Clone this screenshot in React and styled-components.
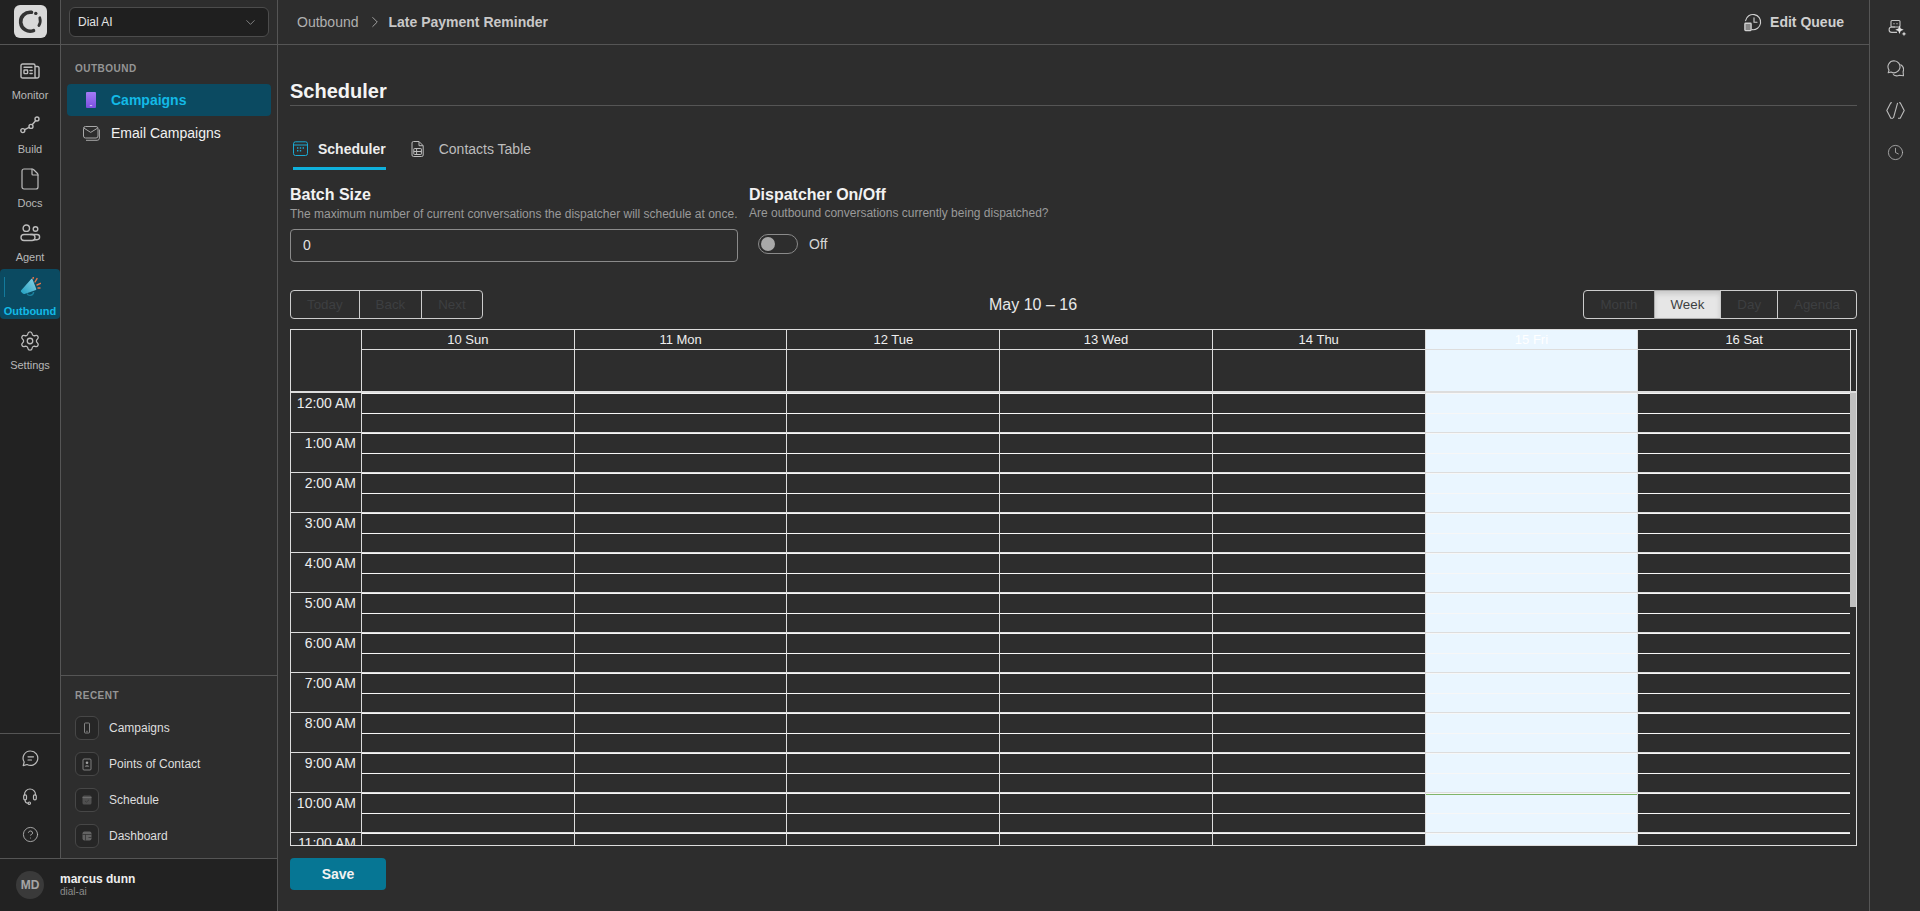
import React from "react";
import styled, { createGlobalStyle } from "styled-components";
import { Settings, File, ChevronDown, ChevronRight, Clock, CircleHelp } from "lucide-react";

const Global = createGlobalStyle`
  * { box-sizing: border-box; }
  html, body { margin: 0; padding: 0; height: 100%; background: #2d2d2d; overflow: hidden; }
  body { font-family: "Liberation Sans", Arial, sans-serif; color: #eee; }
  #root { height: 100%; }
`;

const Shell = styled.div`display: flex; height: 911px; width: 1920px; background: #2d2d2d;`;
const LeftPane = styled.div`width: 278px; flex: none; display: flex; flex-direction: column; border-right: 1px solid #555;`;
const LeftTop = styled.div`flex: 1; display: flex; min-height: 0;`;
const Rail = styled.div`width: 61px; flex: none; display: flex; flex-direction: column; background: #222; border-right: 1px solid #555;`;
const LogoCell = styled.div`height: 45px; flex: none; border-bottom: 1px solid #555; display: flex; justify-content: center; align-items: center; padding-bottom: 1px;`;
const LogoBox = styled.div`width: 33px; height: 33px; border-radius: 6px; background: #d9d9d9; display: flex; align-items: center; justify-content: center;`;
const RailNav = styled.nav`flex: 1; padding-top: 8px; display: flex; flex-direction: column; gap: 4px;`;
const RailItem = styled.div`
  position: relative; height: 50px; display: flex; flex-direction: column; align-items: center; padding-top: 8px;
  border-radius: 4px; background: ${p => (p.$active ? "#0b4a61" : "transparent")};
  ${p => p.$active && `&::before { content: ""; position: absolute; left: 4px; top: 8px; width: 1px; height: 20px; background: #137a9c; }`}
`;
const RailIcon = styled.div`height: 20px; display: flex; align-items: center; justify-content: center;`;
const RailLabel = styled.div`
  margin-top: 8px; font-size: 11px; line-height: 13px; white-space: nowrap;
  color: ${p => (p.$active ? "#13b9e6" : "#b8b8b8")}; font-weight: ${p => (p.$active ? 700 : 400)};
`;
const RailBottom = styled.div`height: 125px; flex: none; border-top: 1px solid #555; padding-top: 5px; display: flex; flex-direction: column;`;
const RailBottomItem = styled.div`height: 38px; display: flex; align-items: center; justify-content: center; color: #bbb;`;

const Side = styled.div`flex: 1; min-width: 0; display: flex; flex-direction: column;`;
const SideTop = styled.div`height: 45px; flex: none; border-bottom: 1px solid #555; padding: 7px 8px 0;`;
const Select = styled.div`
  height: 30px; border: 1px solid #4c4c4c; border-radius: 6px; background: #1f1f1f; padding: 0 10px 0 8px;
  display: flex; align-items: center; justify-content: space-between; font-size: 12px; color: #e4e4e4;
`;
const SideNav = styled.div`flex: 1; padding: 17px 6px 0;`;
const SectionLabel = styled.div`font-size: 10px; line-height: 13px; font-weight: 700; letter-spacing: 0.5px; color: #959595; padding-left: 8px;`;
const NavList = styled.div`margin-top: 9px; display: flex; flex-direction: column; gap: 1px;`;
const NavItem = styled.div`
  height: 32px; border-radius: 4px; display: flex; align-items: center; padding-left: 14px; gap: 10px; font-size: 14px;
  background: ${p => (p.$active ? "#0b4a61" : "transparent")};
  color: ${p => (p.$active ? "#13b9e6" : "#f2f2f2")}; font-weight: ${p => (p.$active ? 700 : 400)};
`;
const NavIcon = styled.div`width: 20px; display: flex; justify-content: center; align-items: center;`;
const Recent = styled.div`height: 183px; flex: none; border-top: 1px solid #555; padding: 13px 6px 0;`;
const RecentList = styled.div`margin-top: 8px; display: flex; flex-direction: column;`;
const RecentItem = styled.div`height: 36px; display: flex; align-items: center; gap: 10px; padding-left: 8px; font-size: 12px; color: #dedede;`;
const RecentIcon = styled.div`width: 24px; height: 24px; border: 1px solid #474747; border-radius: 6px; background: #262626; display: flex; align-items: center; justify-content: center;`;
const UserBar = styled.div`height: 53px; flex: none; background: #222; border-top: 1px solid #555; display: flex; align-items: center; padding-left: 16px; gap: 16px;`;
const Avatar = styled.div`width: 28px; height: 28px; border-radius: 50%; background: #3a3a3a; color: #a5a5a5; font-size: 12px; font-weight: 700; display: flex; align-items: center; justify-content: center;`;
const UserName = styled.div`font-size: 12px; line-height: 14px; font-weight: 700; color: #eee;`;
const UserOrg = styled.div`font-size: 10px; line-height: 12px; color: #8c8c8c;`;

const Main = styled.div`flex: 1; min-width: 0; display: flex; flex-direction: column;`;
const TopBar = styled.div`height: 45px; flex: none; border-bottom: 1px solid #555; display: flex; align-items: center; justify-content: space-between; padding: 0 25px 0 19px;`;
const Crumbs = styled.div`display: flex; align-items: center; font-size: 14px; color: #b0b0b0;`;
const CrumbSep = styled.span`display: inline-flex; margin: 0 5px 0 7px; color: #b8b8b8;`;
const CrumbCurrent = styled.span`font-weight: 700; color: #c8c8c8;`;
const EditQueue = styled.div`display: flex; align-items: center; gap: 7px; font-size: 14px; font-weight: 700; color: #d0d0d0;`;
const Content = styled.div`flex: 1; min-height: 0; padding: 34px 12px 0; display: flex; flex-direction: column;`;
const Title = styled.h1`margin: 0; font-size: 20px; line-height: 24px; font-weight: 700; color: #f4f4f4; padding-bottom: 2px; border-bottom: 1px solid #555; height: 27px;`;
const Tabs = styled.div`margin-top: 24px; height: 40px; display: flex; gap: 25px; padding-left: 3px;`;
const Tab = styled.div`
  height: 40px; display: flex; align-items: center; gap: ${p => (p.$active ? "10px" : "15px")}; font-size: 14px; padding-top: 0;
  font-weight: ${p => (p.$active ? 700 : 400)}; color: ${p => (p.$active ? "#eee" : "#bdbdbd")};
  border-bottom: 3px solid ${p => (p.$active ? "#0fb0db" : "transparent")};
`;
const FormRow = styled.div`margin-top: 15px; display: flex; gap: 11px; height: 77px;`;
const Field = styled.div`width: ${p => p.$w}px; flex: none;`;
const FieldLabel = styled.div`font-size: 16px; line-height: 20px; font-weight: 700; color: #f2f2f2;`;
const FieldHelp = styled.div`margin-top: ${p => p.$mt || 2}px; font-size: 12px; line-height: 14px; color: #9a9a9a; white-space: nowrap;`;
const NumberInput = styled.input`
  display: block; width: 100%; height: 33px; margin-top: 8px; padding: 0 12px 2px; background: transparent; border: 1px solid #8a8a8a; border-radius: 4px;
  font: 14px "Liberation Sans", Arial, sans-serif; color: #e2e2e2; outline: none;
`;
const ToggleRow = styled.div`display: flex; align-items: center; gap: 11px; margin-top: 14px; padding-left: 9px; font-size: 14px; color: #d6d6d6;`;
const Toggle = styled.div`width: 40px; height: 20px; border-radius: 10px; border: 1px solid #8a8a8a; padding: 2px 0 0 2px;`;
const Knob = styled.div`width: 14px; height: 14px; border-radius: 50%; background: #a8a8a8;`;

const Toolbar = styled.div`margin-top: 28px; height: 29px; display: flex; align-items: center; flex: none;`;
const BtnGroup = styled.div`display: inline-flex;`;
const CalBtn = styled.div`
  height: 29px; padding: 6px 16px; font-size: 13.333px; line-height: 15px; border: 1px solid #ccc; color: #3d3f41;
  margin-left: -1px;
  &:first-child { margin-left: 0; border-radius: 4px 0 0 4px; }
  &:last-child { border-radius: 0 4px 4px 0; }
  ${p => p.$active && `background: #e6e6e6; border-color: #adadad; box-shadow: inset 0 3px 5px rgba(0,0,0,.125);`}
`;
const CalLabel = styled.div`flex: 1; text-align: center; font-size: 16px; color: #e8e8e8;`;

const Calendar = styled.div`margin-top: 10px; height: 517px; flex: none; border: 1px solid #ddd; display: flex; flex-direction: column;`;
const CalHead = styled.div`display: flex; flex: none; margin-right: 5px;`;
const Corner = styled.div`width: 70px; flex: none;`;
const HeadContent = styled.div`flex: 1; min-width: 0; border-right: 1px solid #ddd; display: flex; flex-direction: column;`;
const HeadRow = styled.div`display: flex; height: 20px; border-bottom: 1px solid #ddd;`;
const HeadCell = styled.div`
  flex: 1 1 0; min-width: 0; text-align: center; font-size: 13px; line-height: 19px; color: ${p => (p.$today ? "#ffffff" : "#eee")};
  border-left: 1px solid #ddd; background: ${p => (p.$today ? "#eaf6ff" : "transparent")};
`;
const AllDayRow = styled.div`display: flex; height: 41px;`;
const AllDayCell = styled.div`flex: 1 1 0; min-width: 0; border-left: 1px solid #ddd; background: ${p => (p.$today ? "#eaf6ff" : "transparent")};`;
const CalBody = styled.div`flex: 1; min-height: 0; display: flex; overflow: hidden; border-top: 2px solid #ddd;`;
const CalGrid = styled.div`flex: 1; min-width: 0; display: flex; overflow: hidden;`;
const ScrollTrack = styled.div`width: 6px; flex: none;`;
const ScrollThumb = styled.div`height: 214px; background: #c0c0c0;`;
const Gutter = styled.div`width: 70px; flex: none;`;
const DayCol = styled.div`position: relative; flex: 1 1 0; min-width: 0; border-left: 1px solid #ddd; background: ${p => (p.$today ? "#eaf6ff" : "transparent")};`;
const HourGroup = styled.div`height: 40px; flex: none; border-bottom: 1px solid #ddd; display: flex; flex-direction: column;`;
const GutterLabel = styled.div`font-size: 14px; line-height: 20px; text-align: right; padding-right: 5px; color: #eee; white-space: nowrap;`;
const Slot = styled.div`flex: 1; border-top: 1px solid #f7f7f7;`;
const NowLine = styled.div`position: absolute; left: 0; right: 0; top: 401px; height: 1px; background: #7fb56a;`;
const SaveBtn = styled.button`
  margin-top: 12px; width: 96px; height: 32px; flex: none; border: 0; border-radius: 4px; background: #067694; color: #f2f2f2;
  font: 700 14px "Liberation Sans", Arial, sans-serif;
`;

const RightRail = styled.div`width: 51px; flex: none; border-left: 1px solid #555; display: flex; flex-direction: column; align-items: center; padding-top: 16px; gap: 21px;`;
const RightIcon = styled.div`height: 21px; display: flex; align-items: center; justify-content: center;`;

const sk = { fill: "none", stroke: "#bdbdbd", strokeWidth: 1.4, strokeLinecap: "round", strokeLinejoin: "round" };

const LogoMark = () => (
  <svg width="33" height="33" viewBox="0 0 33 33">
    <g fill="none" stroke="#333" strokeLinecap="round">
      <path d="M17.5 7.3A9.5 9.5 0 1 0 19.5 25.6" strokeWidth="3.6" />
      <path d="M25.8 12.8a9.5 9.5 0 0 1-.9 7.7" strokeWidth="2.8" />
    </g>
    <circle cx="21.8" cy="8.4" r="1.7" fill="#333" />
  </svg>
);
const MonitorIcon = () => (
  <svg width="20" height="16" viewBox="0 0 20 16" {...sk}>
    <path d="M15 3.5h2.6A1.4 1.4 0 0 1 19 5v8.2a1.8 1.8 0 0 1-1.8 1.8H2.6A1.6 1.6 0 0 1 1 13.4V2.6A1.6 1.6 0 0 1 2.6 1h10.8A1.6 1.6 0 0 1 15 2.6V13.2A1.8 1.8 0 0 0 16.8 15" />
    <rect x="4" y="7" width="3.6" height="3.6" rx=".5" />
    <path d="M4 4.2h8M10 7.5h2.2M10 10.5h2.2" />
  </svg>
);
const BuildIcon = () => (
  <svg width="20" height="18" viewBox="0 0 20 18" {...sk}>
    <circle cx="2.8" cy="14.6" r="2" /><circle cx="11" cy="10.4" r="2" /><circle cx="17" cy="3" r="2" />
    <path d="M4.6 13.7l4.6-2.4M12.2 8.8l3.6-4.3" />
  </svg>
);
const AgentIcon = () => (
  <svg width="21" height="18" viewBox="0 0 21 18" {...sk}>
    <circle cx="6.3" cy="4.2" r="3.2" /><circle cx="15.5" cy="5" r="2.3" />
    <path d="M4 10.5h8a3 3 0 0 1 0 6H4a3 3 0 0 1 0-6z" />
    <path d="M10.5 10.5h6.5a2.6 2.6 0 0 1 0 5.2h-3" />
  </svg>
);
const MegaphoneIcon = () => (
  <svg width="21" height="21" viewBox="0 0 21 21">
    <defs><linearGradient id="mg" x1="0" y1="1" x2="1" y2="0"><stop offset="0" stopColor="#1f9fc0" /><stop offset="1" stopColor="#8ad3e8" /></linearGradient></defs>
    <path d="M1 13.5 11 2.2c.6-.6 1.3-.5 1.6.2l3.6 9.4c.3.8-.1 1.4-.9 1.4L4.5 17c-.8.2-1.4 0-2-.7L1.2 15c-.4-.5-.5-1-.2-1.5z" fill="url(#mg)" />
    <path d="M7 16.5a3.5 3.5 0 0 0 6.6-1.5" fill="none" stroke="#1b7f9c" strokeWidth="1.4" />
    <path d="M15 5l2-3.4M17 8l3.6-1.6M13 1.5 13.4 0M18 11h2" stroke="#e5744a" strokeWidth="1.4" strokeLinecap="round" fill="none" />
  </svg>
);
const PhoneIcon = () => (
  <svg width="10" height="16" viewBox="0 0 10 16">
    <defs><linearGradient id="ph" x1="0" y1="0" x2="0" y2="1"><stop offset="0" stopColor="#a47bf5" /><stop offset="1" stopColor="#7a4fe0" /></linearGradient></defs>
    <rect width="10" height="16" rx="1" fill="url(#ph)" />
    <path d="M3.8 13.6h2.4" stroke="#e8defc" strokeWidth=".8" />
  </svg>
);
const MailIcon = () => (
  <svg width="17" height="15" viewBox="0 0 17 15" fill="none" stroke="#a8a8a8" strokeWidth="1">
    <rect x=".5" y=".5" width="14.5" height="11.5" rx="2" />
    <path d="M.8 2l6.9 4.4L14.8 2" />
    <path d="M16.4 3.5v8.6a2.2 2.2 0 0 1-2.2 2.2H3" />
  </svg>
);
const ChatIcon = () => (
  <svg width="17" height="17" viewBox="0 0 17 17" {...sk} strokeWidth="1.2">
    <path d="M8.7 1a7.2 7.2 0 1 1-3.6 13.5L1.2 15.6l1-3.6A7.2 7.2 0 0 1 8.7 1z" />
    <path d="M6 6.8h5.5M6 10h3.5" />
  </svg>
);
const HeadsetIcon = () => (
  <svg width="14" height="17" viewBox="0 0 14 17" {...sk} strokeWidth="1.2">
    <path d="M1.5 7V6.5a5.5 5.5 0 0 1 11 0V7" />
    <rect x=".7" y="6.8" width="2.8" height="5" rx="1.3" /><rect x="10.5" y="6.8" width="2.8" height="5" rx="1.3" />
    <path d="M2 11.8c0 2 1 3.4 3 3.4" /><circle cx="6.3" cy="15.2" r="1.2" />
  </svg>
);
const MiniPhone = () => (<svg width="12" height="12" viewBox="0 0 12 12" fill="none" stroke="#8f8f8f" strokeWidth=".9"><rect x="3.5" y="1" width="5" height="10" rx=".8" /><path d="M5.3 9.3h1.4" /></svg>);
const MiniContact = () => (<svg width="12" height="13" viewBox="0 0 12 13"><rect x="2" y="1" width="8" height="11" rx="1" fill="none" stroke="#8a8a8a" strokeWidth=".9" /><circle cx="6" cy="4.8" r="1.3" fill="#a0a0a0" /><path d="M3.8 8.6c.3-1.4 4.1-1.4 4.4 0z" fill="#a0a0a0" /></svg>);
const MiniSchedule = () => (<svg width="12" height="12" viewBox="0 0 12 12"><rect x="1.5" y="1.5" width="9" height="9" rx="1.6" fill="#505050" /><path d="M1.5 3.6h9" stroke="#777" strokeWidth=".8" /><path d="M4 7l1.4 1.2L8 5.8" fill="none" stroke="#393939" strokeWidth=".8" /></svg>);
const MiniDash = () => (<svg width="12" height="12" viewBox="0 0 12 12"><rect x="1.5" y="1.5" width="9" height="9" rx="2" fill="#636363" /><path d="M1.5 4.5h9M4.5 4.5v6M7.5 7.5h3" stroke="#2d2d2d" strokeWidth=".7" /></svg>);
const QueueIcon = () => (
  <svg width="19" height="19" viewBox="0 0 19 19" fill="none" stroke="#cfcfcf" strokeWidth="1.1" strokeLinecap="round">
    <path d="M1.6 7.6A7.6 7.6 0 1 1 8 16.6" /><path d="M10 4.8v4.4h3" />
    <rect x="0.2" y="9.6" width="7.6" height="8.6" rx="1.4" fill="#cfcfcf" stroke="none" />
    <path d="M2 12h4M2 14h4M2 16h4" stroke="#2d2d2d" strokeWidth=".9" />
  </svg>
);
const TabCal = () => (
  <svg width="15" height="15" viewBox="0 0 15 15" fill="none" stroke="#1ba9d2" strokeWidth="1">
    <rect x=".5" y=".8" width="14" height="13.7" rx="2" /><path d="M.5 4h14" />
    <path d="M4 7h1.4M6.8 7h1.4M9.6 7h1.4M4 9.8h1.4M6.8 9.8h1.4" strokeWidth="1.4" />
  </svg>
);
const TabDoc = () => (
  <svg width="13" height="16" viewBox="0 0 13 16" fill="none" stroke="#bdbdbd" strokeWidth="1">
    <path d="M1 14V2A1.5 1.5 0 0 1 2.5.5H8L12.2 4.7V14A1.5 1.5 0 0 1 10.7 15.5H2.5A1.5 1.5 0 0 1 1 14zM8 .7v4h4" />
    <rect x="2.8" y="7.5" width="7.6" height="6" rx=".6" /><path d="M2.8 10.5h7.6M5.6 7.5v6" />
  </svg>
);
const BotSpark = () => (
  <svg width="23" height="23" viewBox="-4 -4 23 23" fill="none" stroke="#c4c4c4" strokeWidth="1.1">
    <rect x="3" y="1.5" width="9" height="6.5" rx="1" /><path d="M6 4.2v1M9 4.2v1" strokeWidth="1.3" />
    <path d="M7 8h-3.2a2.6 2.6 0 0 0 0 5.4H9" />
    <path d="M11.5 6.5l1.2 3 3 1.2-3 1.2-1.2 3-1.2-3-3-1.2 3-1.2z" fill="#e0e0e0" stroke="none" />
    <path d="M16 12.5l.7 1.7 1.7.7-1.7.7-.7 1.7-.7-1.7-1.7-.7 1.7-.7z" fill="#e0e0e0" stroke="none" />
  </svg>
);
const BubbleIcon = () => (
  <svg width="17" height="17" viewBox="0 0 17 17" fill="none" stroke="#bdbdbd" strokeWidth="1.1" strokeLinejoin="round">
    <path d="M7 .8a6 6 0 1 1-3 11.2l-2.8.8.8-2.7A6 6 0 0 1 7 .8z" />
    <path d="M13.5 4.5a6 6 0 0 1 2.6 7.3l.4 3.9-4.2-.5a6 6 0 0 1-6.3-.8" />
  </svg>
);
const CodeHex = () => (
  <svg width="19" height="17" viewBox="0 0 19 17" fill="none" stroke="#bdbdbd" strokeWidth="1.1" strokeLinejoin="round">
    <path d="M6 .8H4.8L.8 8.5l4 7.7H7M13 .8h1.2l4 7.7-4 7.7H12" />
    <path d="M11.6.8 7.4 16.2" />
  </svg>
);

const days = ["10 Sun", "11 Mon", "12 Tue", "13 Wed", "14 Thu", "15 Fri", "16 Sat"];
const hours = Array.from({ length: 12 }, (_, i) => `${i === 0 ? 12 : i}:00 AM`);
const railItems = [
  ["Monitor", <MonitorIcon />], ["Build", <BuildIcon />], ["Docs", <File size={24} strokeWidth={1.2} color="#bdbdbd" />],
  ["Agent", <AgentIcon />], ["Outbound", <MegaphoneIcon />, true], ["Settings", <Settings size={22} strokeWidth={1.4} color="#bdbdbd" />],
];
const recent = [["Campaigns", <MiniPhone />], ["Points of Contact", <MiniContact />], ["Schedule", <MiniSchedule />], ["Dashboard", <MiniDash />]];

export default function App() {
  return (
    <Shell>
      <Global />
      <LeftPane>
        <LeftTop>
          <Rail>
            <LogoCell><LogoBox><LogoMark /></LogoBox></LogoCell>
            <RailNav>
              {railItems.map(([label, icon, active]) => (
                <RailItem key={label} $active={active}>
                  <RailIcon>{icon}</RailIcon>
                  <RailLabel $active={active}>{label}</RailLabel>
                </RailItem>
              ))}
            </RailNav>
            <RailBottom>
              <RailBottomItem><ChatIcon /></RailBottomItem>
              <RailBottomItem><HeadsetIcon /></RailBottomItem>
              <RailBottomItem><CircleHelp size={17} strokeWidth={1.2} /></RailBottomItem>
            </RailBottom>
          </Rail>
          <Side>
            <SideTop>
              <Select>Dial AI<ChevronDown size={15} strokeWidth={1.1} color="#aaa" /></Select>
            </SideTop>
            <SideNav>
              <SectionLabel>OUTBOUND</SectionLabel>
              <NavList>
                <NavItem $active><NavIcon><PhoneIcon /></NavIcon>Campaigns</NavItem>
                <NavItem><NavIcon><MailIcon /></NavIcon>Email Campaigns</NavItem>
              </NavList>
            </SideNav>
            <Recent>
              <SectionLabel>RECENT</SectionLabel>
              <RecentList>
                {recent.map(([label, icon]) => (
                  <RecentItem key={label}><RecentIcon>{icon}</RecentIcon>{label}</RecentItem>
                ))}
              </RecentList>
            </Recent>
          </Side>
        </LeftTop>
        <UserBar>
          <Avatar>MD</Avatar>
          <div><UserName>marcus dunn</UserName><UserOrg>dial-ai</UserOrg></div>
        </UserBar>
      </LeftPane>
      <Main>
        <TopBar>
          <Crumbs>Outbound<CrumbSep><ChevronRight size={18} strokeWidth={1.1} /></CrumbSep><CrumbCurrent>Late Payment Reminder</CrumbCurrent></Crumbs>
          <EditQueue><QueueIcon />Edit Queue</EditQueue>
        </TopBar>
        <Content>
          <Title>Scheduler</Title>
          <Tabs>
            <Tab $active><TabCal />Scheduler</Tab>
            <Tab><TabDoc />Contacts Table</Tab>
          </Tabs>
          <FormRow>
            <Field $w={448}>
              <FieldLabel>Batch Size</FieldLabel>
              <FieldHelp>The maximum number of current conversations the dispatcher will schedule at once.</FieldHelp>
              <NumberInput value="0" readOnly />
            </Field>
            <Field $w={400}>
              <FieldLabel>Dispatcher On/Off</FieldLabel>
              <FieldHelp $mt={1}>Are outbound conversations currently being dispatched?</FieldHelp>
              <ToggleRow><Toggle><Knob /></Toggle>Off</ToggleRow>
            </Field>
          </FormRow>
          <Toolbar>
            <BtnGroup><CalBtn>Today</CalBtn><CalBtn>Back</CalBtn><CalBtn>Next</CalBtn></BtnGroup>
            <CalLabel>May 10 – 16</CalLabel>
            <BtnGroup><CalBtn>Month</CalBtn><CalBtn $active>Week</CalBtn><CalBtn>Day</CalBtn><CalBtn>Agenda</CalBtn></BtnGroup>
          </Toolbar>
          <Calendar>
            <CalHead>
              <Corner />
              <HeadContent>
                <HeadRow>{days.map((d, i) => <HeadCell key={d} $today={i === 5}>{d}</HeadCell>)}</HeadRow>
                <AllDayRow>{days.map((d, i) => <AllDayCell key={d} $today={i === 5} />)}</AllDayRow>
              </HeadContent>
            </CalHead>
            <CalBody>
              <CalGrid>
                <Gutter>
                  {hours.map(h => <HourGroup key={h}><GutterLabel>{h}</GutterLabel></HourGroup>)}
                </Gutter>
                {days.map((d, i) => (
                  <DayCol key={d} $today={i === 5}>
                    {hours.map(h => <HourGroup key={h}><Slot /><Slot /></HourGroup>)}
                    {i === 5 && <NowLine />}
                  </DayCol>
                ))}
              </CalGrid>
              <ScrollTrack><ScrollThumb /></ScrollTrack>
            </CalBody>
          </Calendar>
          <SaveBtn>Save</SaveBtn>
        </Content>
      </Main>
      <RightRail>
        <RightIcon><BotSpark /></RightIcon>
        <RightIcon><BubbleIcon /></RightIcon>
        <RightIcon><CodeHex /></RightIcon>
        <RightIcon><Clock size={17} strokeWidth={1.1} color="#bdbdbd" /></RightIcon>
      </RightRail>
    </Shell>
  );
}
